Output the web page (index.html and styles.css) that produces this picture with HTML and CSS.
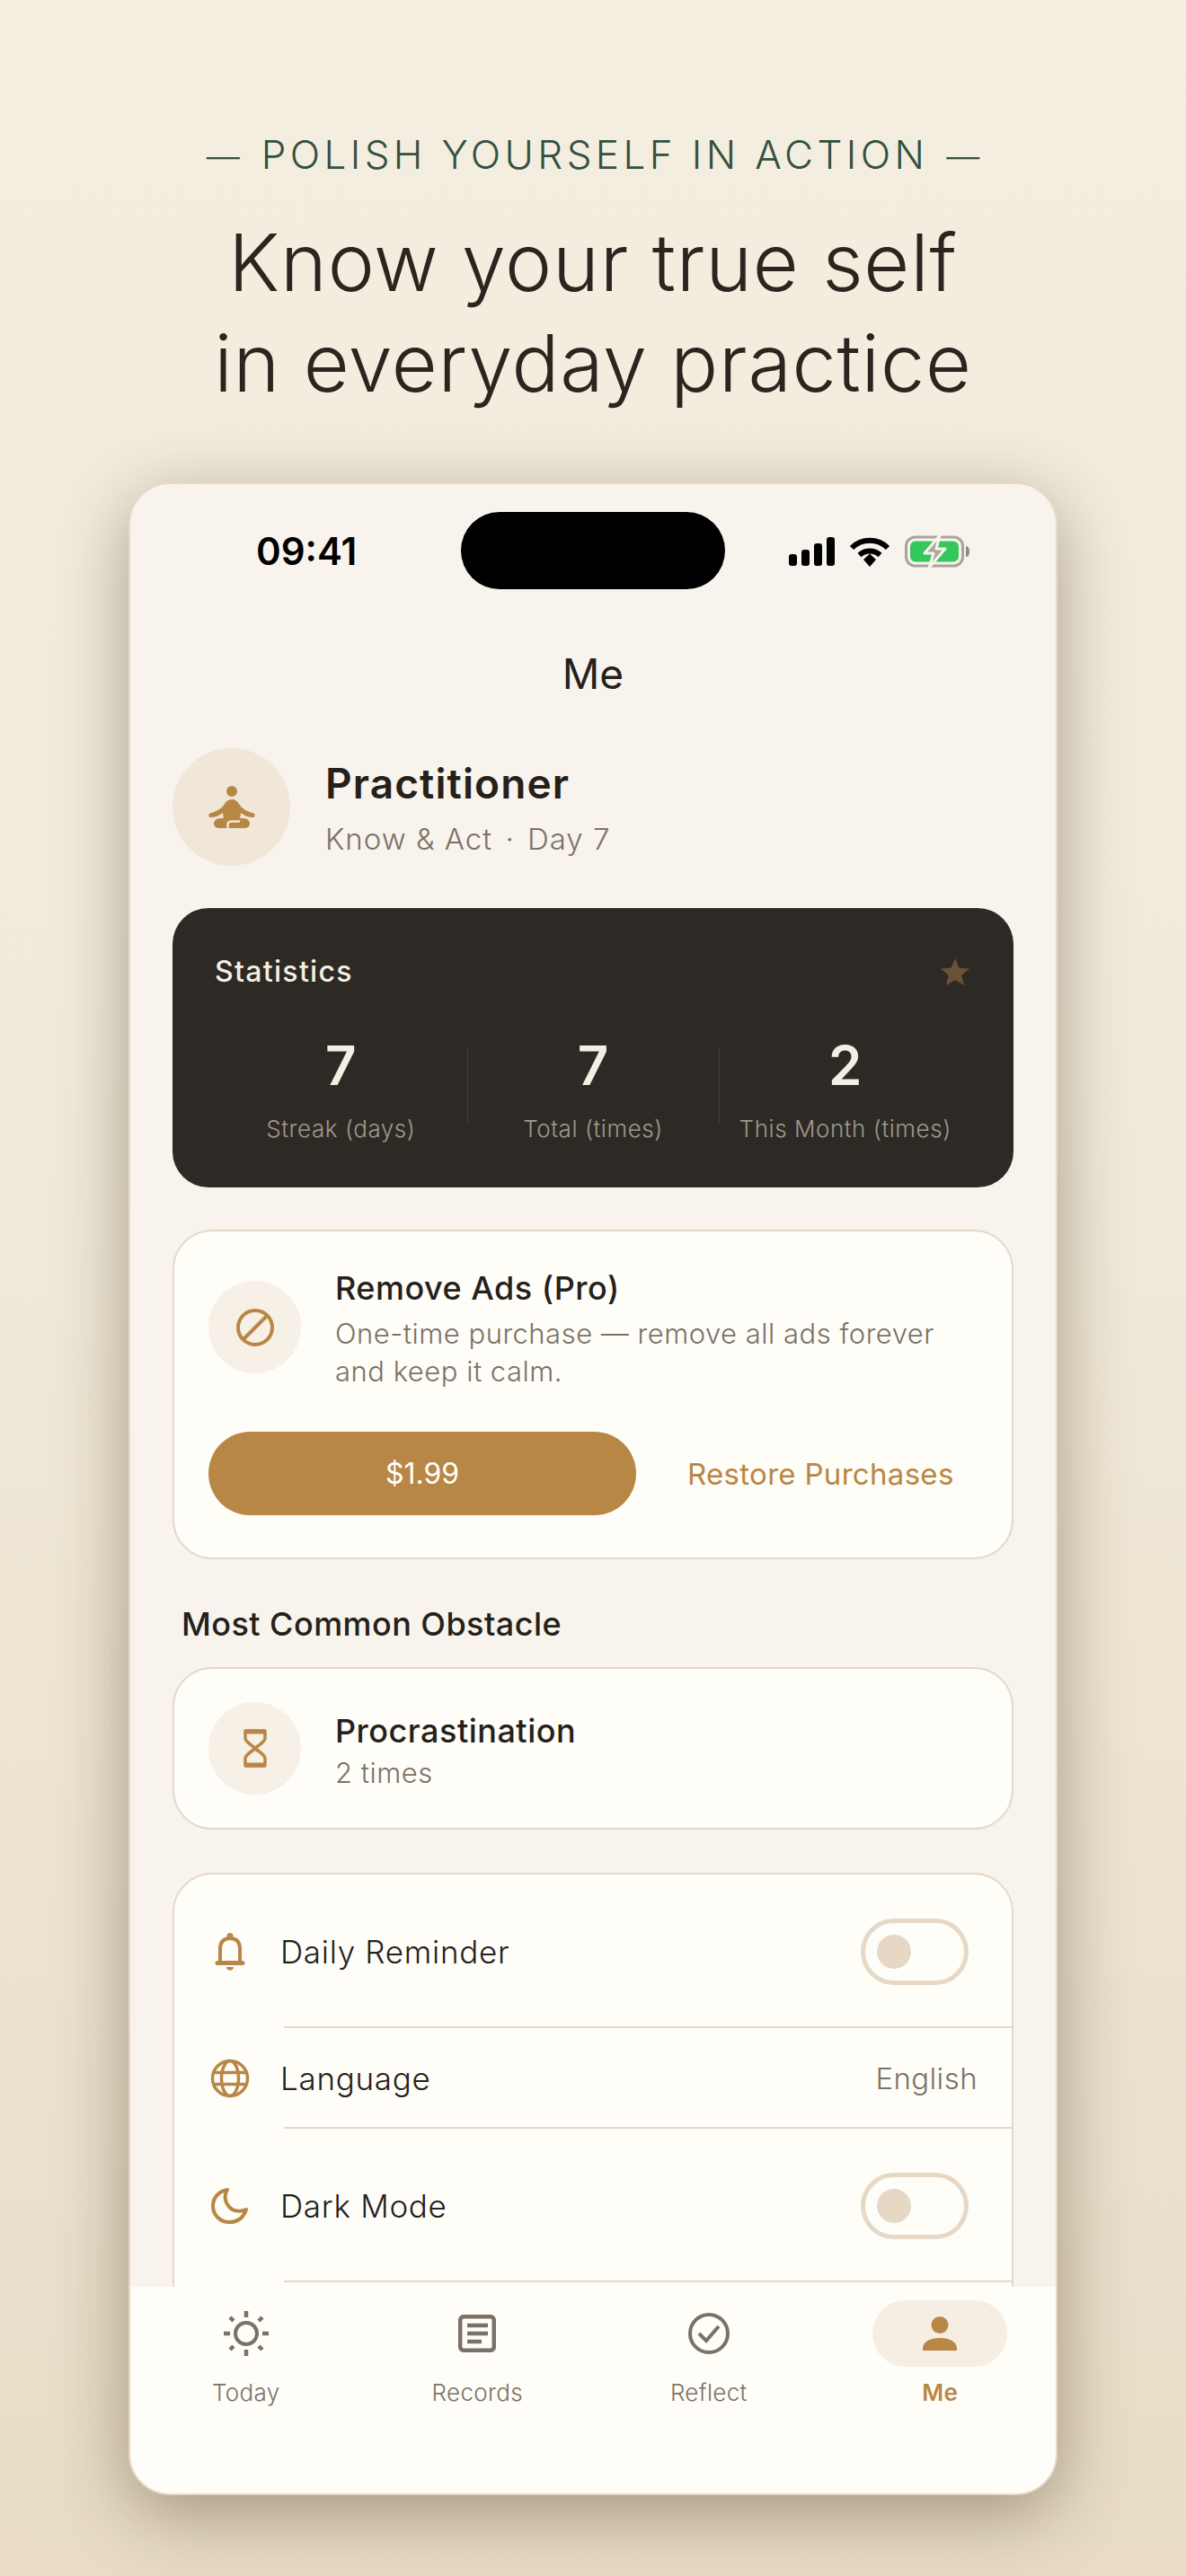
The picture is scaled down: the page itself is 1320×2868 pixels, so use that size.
FILE: index.html
```html
<!DOCTYPE html>
<html lang="en">
<head>
    <meta charset="UTF-8">
    <title>Know your true self</title>
    <link rel="stylesheet" href="styles.css">
</head>
<body>
    <header class="hero">
        <p class="tagline"><span class="dash dash-left">—</span>POLISH YOURSELF IN ACTION<span class="dash dash-right">—</span></p>
        <h1 class="headline">Know your true self<br>in everyday practice</h1>
    </header>

    <div class="phone">
        <div class="status-bar">
            <span class="time">09:41</span>
            <div class="island"></div>
            <div class="status-icons">
                <svg width="51" height="32" viewBox="0 0 51 32" fill="#000">
                    <rect x="0" y="19" width="9" height="13" rx="3"/>
                    <rect x="14" y="14" width="9" height="18" rx="3"/>
                    <rect x="28" y="7" width="9" height="25" rx="3"/>
                    <rect x="42" y="0" width="9" height="32" rx="3"/>
                </svg>
                <svg width="46" height="33" viewBox="0 0 46 33" fill="none" stroke="#000" stroke-width="6">
                    <path d="M3 12 C14 1 32 1 43 12"/>
                    <path d="M11.5 20 C18 14 28 14 34.5 20"/>
                    <path d="M16 25 L23 18.5 L30 25 L23 33 Z" fill="#000" stroke="none"/>
                </svg>
                <svg width="73" height="36" viewBox="0 0 73 36">
                    <rect x="1.5" y="2" width="63" height="32" rx="10" fill="none" stroke="#a8a49c" stroke-width="3"/>
                    <rect x="6" y="6.5" width="54" height="23" rx="6" fill="#34c75c"/>
                    <path d="M68 12 C71 12 72 15 72 18 C72 21 71 24 68 24 Z" fill="#8f8b83"/>
                    <path d="M39 0 L22 20 H32 L27 36 L45 15 H35 Z" fill="#aca89f" stroke="#f8f3ec" stroke-width="3" stroke-linejoin="round"/>
                </svg>
            </div>
        </div>

        <main class="content">
            <h2 class="page-title">Me</h2>

            <section class="profile">
                <div class="avatar">
                    <svg width="52" height="47" viewBox="0 0 52 47" fill="#b88746">
                        <circle cx="26" cy="6" r="6"/>
                        <path d="M26 15 C22 15 20 17 18 20 C15 25 10 28 3 30 C-1 31 0 35 3 35 C9 35 13 32 16 30 L17 38 H35 L36 30 C39 32 43 35 49 35 C52 35 53 31 49 30 C42 28 37 25 34 20 C32 17 30 15 26 15 Z"/>
                        <path d="M13 36 H39 C43 36 46 39 46 42 C46 45 43 47 40 47 H12 C9 47 6 45 6 42 C6 39 9 36 13 36 Z"/>
                        <path d="M21.5 47 V43 C21.5 40.5 23 39.5 26 39.5 H34" fill="none" stroke="#f0e7d8" stroke-width="2.5" stroke-linecap="round"/>
                    </svg>
                </div>
                <div>
                    <div class="profile-name">Practitioner</div>
                    <div class="profile-sub">Know &amp; Act <span class="dot">·</span> Day 7</div>
                </div>
            </section>

            <section class="stats">
                <div class="stats-head">
                    <span class="stats-title">Statistics</span>
                    <svg width="32" height="30" viewBox="0 0 32 30" fill="#6a5236">
                        <path d="M16 0 L20.5 10.5 L32 11.5 L23.2 19 L26 30 L16 24.2 L6 30 L8.8 19 L0 11.5 L11.5 10.5 Z"/>
                    </svg>
                </div>
                <div class="stats-row">
                    <div class="stat"><div class="stat-num">7</div><div class="stat-label">Streak (days)</div></div>
                    <div class="stat"><div class="stat-num">7</div><div class="stat-label">Total (times)</div></div>
                    <div class="stat"><div class="stat-num">2</div><div class="stat-label">This Month (times)</div></div>
                </div>
            </section>

            <section class="card pro-card">
                <div class="card-row">
                    <div class="icon-circle pro-icon">
                        <svg width="42" height="42" viewBox="0 0 42 42" fill="none" stroke="#b88746" stroke-width="4">
                            <circle cx="21" cy="21" r="19"/>
                            <path d="M8 34 L34 8"/>
                        </svg>
                    </div>
                    <div class="card-text">
                        <div class="card-title">Remove Ads (Pro)</div>
                        <div class="card-desc">One-time purchase — remove all ads forever<br>and keep it calm.</div>
                    </div>
                </div>
                <div class="pro-actions">
                    <div class="buy-button">$1.99</div>
                    <div class="restore">Restore Purchases</div>
                </div>
            </section>

            <h3 class="section-title">Most Common Obstacle</h3>

            <section class="card obstacle-card">
                <div class="card-row">
                    <div class="icon-circle">
                        <svg width="26" height="43" viewBox="0 0 26 43" fill="none" stroke="#b88746" stroke-width="3.5" stroke-linejoin="round">
                            <path d="M2 2 H24 V10 C24 15 16 18 13 21.5 C16 25 24 28 24 33 V41 H2 V33 C2 28 10 25 13 21.5 C10 18 2 15 2 10 Z"/>
                            <path d="M2 3 H24 M2 40 H24" stroke-width="5"/>
                        </svg>
                    </div>
                    <div class="card-text obstacle-text">
                        <div class="card-title">Procrastination</div>
                        <div class="card-count">2 times</div>
                    </div>
                </div>
            </section>

            <section class="card settings">
                <div class="setting setting-toggle">
                    <svg class="setting-icon" width="44" height="42" viewBox="0 0 44 42" fill="none" stroke="#b88746" stroke-width="4" stroke-linejoin="round">
                        <path d="M11 33 V18 C11 10 15 6 22 6 C29 6 33 10 33 18 V33"/>
                        <path d="M8 33.5 H36" stroke-width="5" stroke-linecap="round"/>
                        <circle cx="22" cy="3.5" r="3.5" fill="#b88746" stroke="none"/>
                        <path d="M18 38 H26 C26 43 18 43 18 38 Z" fill="#b88746" stroke="none"/>
                    </svg>
                    <span class="setting-label">Daily Reminder</span>
                    <div class="toggle"><div class="toggle-thumb"></div></div>
                </div>
                <div class="setting setting-lang">
                    <svg class="setting-icon" width="44" height="44" viewBox="0 0 44 44" fill="none" stroke="#b88746" stroke-width="3.5">
                        <circle cx="22" cy="22" r="19.5"/>
                        <ellipse cx="22" cy="22" rx="9.5" ry="19.5"/>
                        <path d="M3 15.5 H41 M3 28.5 H41"/>
                    </svg>
                    <span class="setting-label">Language</span>
                    <span class="setting-value">English</span>
                </div>
                <div class="setting setting-toggle">
                    <svg class="setting-icon" width="44" height="40" viewBox="0 0 44 40" fill="none" stroke="#b88746" stroke-width="4" stroke-linejoin="round">
                        <path d="M19 2 C9 4 3 11 3 20 C3 30 11 38 21 38 C30 38 37 33 40 24 C36 26 27 27 22 22 C16 16 15 8 19 2 Z"/>
                    </svg>
                    <span class="setting-label">Dark Mode</span>
                    <div class="toggle"><div class="toggle-thumb"></div></div>
                </div>
                <div class="setting setting-toggle"></div>
            </section>
        </main>

        <nav class="tab-bar">
            <div class="tab">
                <div class="tab-icon">
                    <svg width="52" height="52" viewBox="0 0 52 52" fill="none" stroke="#7a7266" stroke-width="4.5">
                        <circle cx="26" cy="26" r="12" stroke-width="4"/>
                        <path d="M26 1 V8 M26 44 V51 M1 26 H8 M44 26 H51 M8 8 L12 12 M40 40 L44 44 M8 44 L12 40 M40 12 L44 8"/>
                    </svg>
                </div>
                <span>Today</span>
            </div>
            <div class="tab">
                <div class="tab-icon">
                    <svg width="42" height="42" viewBox="0 0 42 42" fill="none" stroke="#7a7266" stroke-width="4.5">
                        <rect x="2.2" y="2.2" width="37.6" height="37.6" rx="4"/>
                        <path d="M10 12 H33 M10 21 H33 M10 30 H26"/>
                    </svg>
                </div>
                <span>Records</span>
            </div>
            <div class="tab">
                <div class="tab-icon">
                    <svg width="46" height="46" viewBox="0 0 46 46" fill="none" stroke="#7a7266" stroke-width="4">
                        <circle cx="23" cy="23" r="21"/>
                        <path d="M12 23 L20 31 L34 15"/>
                    </svg>
                </div>
                <span>Reflect</span>
            </div>
            <div class="tab tab-active">
                <div class="tab-icon">
                    <svg width="38" height="38" viewBox="0 0 38 38" fill="#b88746">
                        <circle cx="19" cy="9.5" r="9.5"/>
                        <path d="M0 38 V36 C0 28 8 24 19 24 C30 24 38 28 38 36 V38 Z"/>
                    </svg>
                </div>
                <span>Me</span>
            </div>
        </nav>
    </div>
</body>
</html>
```

FILE: styles.css
```css
* {
    box-sizing: border-box;
}

html, body {
    margin: 0;
    height: 100%;
}

body {
    width: 1320px;
    height: 2868px;
    overflow: hidden;
    font-family: Inter, "Liberation Sans", sans-serif;
    color: #24211b;
    background: linear-gradient(180deg, #f4eee0 0%, #f2ebdc 40%, #e8dcc6 100%);
}

.hero {
    padding-top: 146px;
    text-align: center;
}

.tagline {
    margin: 0;
    font-size: 44px;
    line-height: 52px;
    font-weight: 300;
    letter-spacing: 4.4px;
    color: #34503f;
}

.dash {
    font-size: 37px;
    line-height: 1;
    letter-spacing: 0;
}

.dash-left {
    margin-right: 24px;
}

.dash-right {
    margin-left: 20px;
}

.headline {
    margin: 38px 0 0;
    font-size: 88px;
    line-height: 112px;
    font-weight: 300;
    letter-spacing: 0.8px;
    color: #2a261f;
}

/* phone frame */
.phone {
    display: flex;
    flex-direction: column;
    width: 1034px;
    height: 2241px;
    margin: 77px auto 0;
    border: 2px solid #e8d9c8;
    border-radius: 46px;
    overflow: hidden;
    background: #f8f3ec;
    box-shadow: 0 20px 80px rgba(60, 45, 20, 0.42);
}

.status-bar {
    flex: none;
    position: relative;
    height: 119px;
    padding: 50px 0 0 140px;
}

.time {
    font-size: 42px;
    line-height: 50px;
    font-weight: 600;
    color: #000;
}

.island {
    position: absolute;
    left: 368px;
    top: 31px;
    width: 294px;
    height: 86px;
    border-radius: 43px;
    background: #000;
}

.status-icons {
    position: absolute;
    right: 95px;
    top: 57px;
    display: flex;
    align-items: center;
    gap: 16px;
}

.content {
    flex: 1;
    min-height: 0;
    overflow: hidden;
    padding: 0 47px;
}

.page-title {
    margin: 0;
    padding-top: 62px;
    height: 175px;
    text-align: center;
    font-size: 46px;
    line-height: 60px;
    font-weight: 400;
}

.profile {
    display: flex;
    align-items: center;
    gap: 39px;
    height: 131px;
}

.avatar {
    display: flex;
    align-items: center;
    justify-content: center;
    width: 131px;
    height: 131px;
    border-radius: 50%;
    background: #f0e7d8;
}

.profile-name {
    font-size: 46px;
    line-height: 58px;
    font-weight: 600;
    letter-spacing: 1.1px;
}

.profile-sub {
    margin-top: 12px;
    font-size: 33px;
    line-height: 42px;
    letter-spacing: 1px;
    font-weight: 300;
    color: #7a7266;
}

.dot {
    margin: 0 4px;
}

.stats {
    height: 311px;
    margin-top: 47px;
    padding: 48px 47px 0;
    border-radius: 40px;
    background: #2d2a26;
}

.stats-head {
    display: flex;
    align-items: center;
    justify-content: space-between;
    height: 46px;
    padding-right: 2px;
}

.stats-title {
    font-size: 32px;
    line-height: 46px;
    font-weight: 500;
    letter-spacing: 1.3px;
    color: #f5efe3;
}

.stats-row {
    display: flex;
    margin-top: 43px;
}

.stat {
    width: 282px;
    height: 100px;
    text-align: center;
    position: relative;
}

.stat + .stat::before {
    content: "";
    position: absolute;
    left: 0;
    top: 19px;
    width: 1px;
    height: 84px;
    background: rgba(255, 255, 255, 0.1);
}

.stat-num {
    padding-top: 6px;
    font-size: 60px;
    line-height: 64px;
    font-weight: 600;
    color: #f5efe3;
}

.stat-label {
    margin-top: 21px;
    font-size: 26px;
    line-height: 36px;
    font-weight: 300;
    letter-spacing: 0.55px;
    color: #a09888;
}

/* cards */
.card {
    border: 2px solid #e5d8c6;
    border-radius: 44px;
    background: #fffdf8;
}

.card-row {
    display: flex;
    align-items: center;
    gap: 38px;
}

.icon-circle {
    flex: none;
    display: flex;
    align-items: center;
    justify-content: center;
    width: 103px;
    height: 103px;
    border-radius: 50%;
    background: #f6f0e6;
}

.pro-icon {
    align-self: flex-start;
    margin-top: 14px;
}

.obstacle-text {
    padding-top: 6px;
}

.card-title {
    font-size: 36px;
    line-height: 44px;
    font-weight: 500;
    letter-spacing: 0.5px;
}

.card-desc {
    margin-top: 8px;
    font-size: 31px;
    line-height: 42px;
    font-weight: 300;
    letter-spacing: 0.5px;
    color: #7a7266;
}

.card-count {
    margin-top: 4px;
    font-size: 31px;
    line-height: 42px;
    font-weight: 300;
    letter-spacing: 0.5px;
    color: #7a7266;
}

.pro-card {
    height: 367px;
    margin-top: 47px;
    padding: 41px 38px 0;
}

.pro-actions {
    display: flex;
    align-items: center;
    margin-top: 46px;
}

.buy-button {
    width: 476px;
    height: 93px;
    border-radius: 47px;
    background: #b88746;
    color: #fff;
    text-align: center;
    font-size: 32px;
    line-height: 93px;
}

.restore {
    margin-left: 57px;
    font-size: 33px;
    line-height: 44px;
    letter-spacing: 0.3px;
    color: #b88746;
}

.section-title {
    margin: 48px 0 0 10px;
    height: 72px;
    font-size: 36px;
    line-height: 48px;
    font-weight: 500;
    letter-spacing: 0.45px;
}

.obstacle-card {
    height: 181px;
    padding: 37px 38px 0;
}

.settings {
    margin-top: 48px;
}

.setting {
    display: flex;
    align-items: center;
    position: relative;
    padding: 0 38px 0 40px;
}

.setting-toggle {
    height: 171px;
}

.setting-lang {
    height: 112px;
}

.setting + .setting::before {
    content: "";
    position: absolute;
    left: 122px;
    right: 0;
    top: -2px;
    height: 2px;
    background: #e5d8c6;
}

.setting-icon {
    flex: none;
}

.setting-label {
    margin-left: 34px;
    font-size: 35px;
    line-height: 44px;
    font-weight: 300;
    letter-spacing: 0.7px;
}

.setting-value {
    margin-left: auto;
    font-size: 33px;
    line-height: 44px;
    font-weight: 300;
    letter-spacing: 0.4px;
    color: #7a7266;
}

.toggle {
    margin-left: auto;
    margin-right: 10px;
    display: flex;
    align-items: center;
    width: 120px;
    height: 74px;
    padding-left: 13px;
    border: 5px solid #e6d8c5;
    border-radius: 37px;
}

.toggle-thumb {
    width: 38px;
    height: 38px;
    border-radius: 50%;
    background: #e6d8c5;
}

/* tab bar */
.tab-bar {
    flex: none;
    display: flex;
    height: 230px;
    background: #fffdf8;
}

.tab {
    flex: 1;
    display: flex;
    flex-direction: column;
    align-items: center;
    padding-top: 15px;
    font-size: 26px;
    line-height: 36px;
    font-weight: 300;
    letter-spacing: 0.3px;
    color: #7a7266;
}

.tab-icon {
    display: flex;
    align-items: center;
    justify-content: center;
    width: 150px;
    height: 74px;
    margin-bottom: 11px;
    border-radius: 37px;
}

.tab-active {
    color: #b88746;
    font-weight: 600;
}

.tab-active .tab-icon {
    background: #f6eee2;
}
```
